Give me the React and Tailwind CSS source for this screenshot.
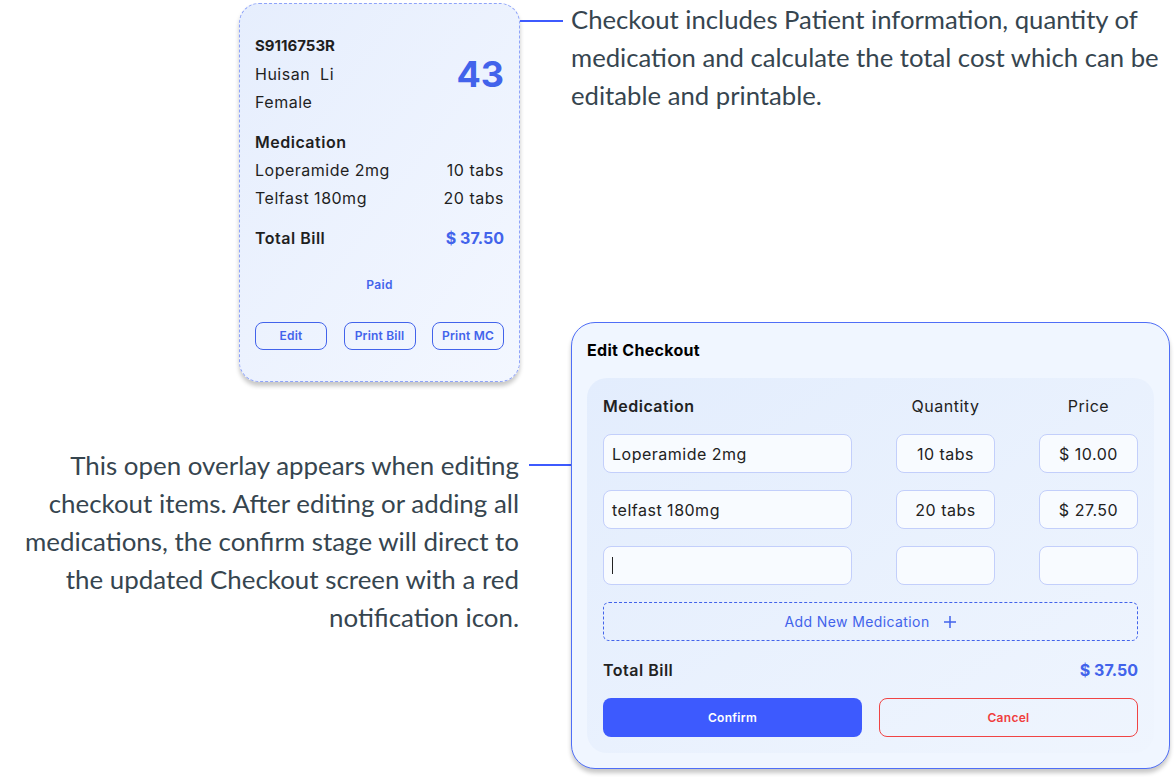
import React from "react";

const ui = { fontFamily: "Inter, 'Open Sans', sans-serif" };
const ann = { fontFamily: "Lato, 'Open Sans', sans-serif" };

function Field({ children, center, className = "" }) {
  return (
    <div
      className={
        "h-[39px] rounded-[8px] border border-[#c3cffb] bg-[#f8fbff] flex items-center text-[16px] tracking-[0.5px] text-[#222] " +
        (center ? "justify-center " : "px-2 ") +
        className
      }
    >
      {children}
    </div>
  );
}

function CardButton({ children }) {
  return (
    <div className="h-[28px] w-[72px] rounded-[8px] border border-[#4263eb] flex items-center justify-center text-[12px] tracking-[0.2px] font-semibold text-[#4263eb]">
      {children}
    </div>
  );
}

export default function App() {
  return (
    <div className="w-[1175px] h-[778px] bg-white flex overflow-hidden" style={ui}>
      {/* Left column */}
      <div className="w-[520px] flex flex-col shrink-0">
        <div className="ml-[239px] mt-[3px] w-[281px] h-[379px] rounded-[20px] border border-dashed border-[#8ea3f9] bg-gradient-to-br from-[#e6eefd] to-[#f3f7ff] shadow-[0_4px_4px_rgba(0,0,0,0.22)] px-[15px] pt-[28px] pb-[31px] flex flex-col text-[#1f1f1f]">
          <div className="flex justify-between items-center">
            <div className="flex flex-col text-[16px] tracking-[0.5px] leading-[28px]">
              <span className="font-bold text-[15px] tracking-normal">S9116753R</span>
              <span className="whitespace-pre">Huisan  Li</span>
              <span>Female</span>
            </div>
            <span className="text-[36px] font-bold text-[#4263eb] leading-none">43</span>
          </div>
          <div className="mt-[12px] flex flex-col text-[16px] tracking-[0.5px] leading-[28px]">
            <span className="font-semibold">Medication</span>
            <div className="flex justify-between">
              <span>Loperamide 2mg</span>
              <span>10 tabs</span>
            </div>
            <div className="flex justify-between">
              <span>Telfast 180mg</span>
              <span>20 tabs</span>
            </div>
          </div>
          <div className="mt-[12px] flex justify-between text-[16px] leading-[28px]">
            <span className="font-semibold tracking-[0.5px]">Total Bill</span>
            <span className="font-bold text-[#4263eb]">$ 37.50</span>
          </div>
          <div className="mt-[19px] text-center text-[12px] tracking-[0.3px] leading-[28px] font-semibold text-[#4263eb]">Paid</div>
          <div className="mt-[23px] flex justify-between">
            <CardButton>Edit</CardButton>
            <CardButton>Print Bill</CardButton>
            <CardButton>Print MC</CardButton>
          </div>
        </div>
        <div
          className="mt-[64px] text-right text-[25.9px] leading-[38px] text-[#36454f] whitespace-nowrap pr-[1px]"
          style={ann}
        >
          This open overlay appears when editing
          <br />
          checkout items. After editing or adding all
          <br />
          medications, the confirm stage will direct to
          <br />
          the updated Checkout screen with a red
          <br />
          notification icon.
        </div>
      </div>

      {/* Right column */}
      <div className="flex-1 flex flex-col">
        <div className="flex items-start">
          <div className="mt-[20px] w-[43px] h-[2px] bg-[#3d5afe] shrink-0" />
          <div
            className="ml-[8px] text-[25.7px] leading-[38px] text-[#36454f] whitespace-nowrap"
            style={ann}
          >
            Checkout includes Patient information, quantity of
            <br />
            medication and calculate the total cost which can be
            <br />
            editable and printable.
          </div>
        </div>
        <div className="mt-[208px] flex items-start">
          <div className="mt-[142px] ml-[9px] w-[42px] h-[2px] bg-[#3d5afe] shrink-0" />
          <div className="w-[599px] h-[447px] rounded-[24px] border border-[#4f6ef7] bg-[#f0f6ff] shadow-[0_4px_4px_rgba(0,0,0,0.22)] px-[15px] pt-[16px] pb-[15px] flex flex-col">
            <div className="text-[16px] tracking-[0.3px] leading-[22px] font-bold text-black">Edit Checkout</div>
            <div className="mt-[17px] flex-1 rounded-[20px] bg-gradient-to-br from-[#e3edfd] to-[#eff5fe] px-4 pt-[17px] pb-4 flex flex-col gap-[17px] text-[#222]">
              <div className="grid grid-cols-[249px_99px_99px] gap-x-[44px] text-[16px] tracking-[0.5px] leading-[22px]">
                <span className="font-semibold">Medication</span>
                <span className="text-center">Quantity</span>
                <span className="text-center">Price</span>
              </div>
              <div className="grid grid-cols-[249px_99px_99px] gap-x-[44px]">
                <Field>Loperamide 2mg</Field>
                <Field center>10 tabs</Field>
                <Field center>$ 10.00</Field>
              </div>
              <div className="grid grid-cols-[249px_99px_99px] gap-x-[44px]">
                <Field>telfast 180mg</Field>
                <Field center>20 tabs</Field>
                <Field center>$ 27.50</Field>
              </div>
              <div className="grid grid-cols-[249px_99px_99px] gap-x-[44px]">
                <Field>
                  <span className="block w-px h-[17px] bg-[#222]" />
                </Field>
                <Field center />
                <Field center />
              </div>
              <div className="h-[39px] rounded-[6px] border border-dashed border-[#4263eb] flex items-center justify-center gap-[13px] text-[14px] tracking-[0.4px] text-[#4263eb]">
                <span>Add New Medication</span>
                <svg width="14" height="14" viewBox="0 0 14 14" fill="none" stroke="#4263eb" strokeWidth="1.5">
                  <path d="M7 1v12M1 7h12" />
                </svg>
              </div>
              <div className="flex justify-between text-[16px] leading-[22px] mt-px">
                <span className="font-semibold tracking-[0.5px]">Total Bill</span>
                <span className="font-bold text-[#4263eb]">$ 37.50</span>
              </div>
              <div className="grid grid-cols-2 gap-[17px]">
                <div className="h-[39px] rounded-[8px] bg-[#3d5afe] flex items-center justify-center text-[12px] tracking-[0.3px] font-semibold text-white">
                  Confirm
                </div>
                <div className="h-[39px] rounded-[8px] border border-[#f04444] flex items-center justify-center text-[12px] tracking-[0.3px] font-semibold text-[#f03e3e]">
                  Cancel
                </div>
              </div>
            </div>
          </div>
        </div>
      </div>
    </div>
  );
}
